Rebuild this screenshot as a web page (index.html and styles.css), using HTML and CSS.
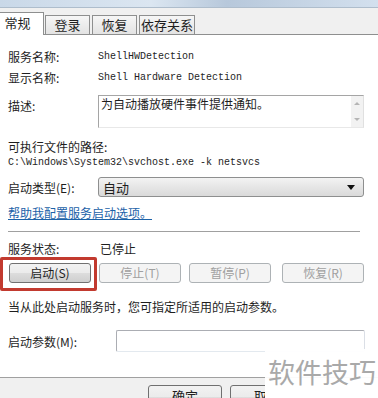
FILE: index.html
```html
<!DOCTYPE html>
<html lang="zh-CN">
  <head>
    <meta charset="UTF-8" />
    <title>ShellHWDetection 属性</title>
    <link rel="stylesheet" href="styles.css">
  </head>
  <body>
    <div class="window">
      <div class="titlebar"></div>
      <div class="tab_host">
        <div class="tab on">常规</div>
        <div class="tab">登录</div>
        <div class="tab">恢复</div>
        <div class="tab wide">依存关系</div>
      </div>

      <div class="panel">
        <div class="row">
          <span class="label">服务名称:</span>
          <span class="mono">ShellHWDetection</span>
        </div>
        <div class="row">
          <span class="label">显示名称:</span>
          <span class="mono">Shell Hardware Detection</span>
        </div>
        <div class="row desc_row">
          <span class="label">描述:</span>
          <div class="desc">
            <span>为自动播放硬件事件提供通知。</span>
            <div class="scroll">
              <span class="up"></span>
              <span class="down"></span>
            </div>
          </div>
        </div>
        <div class="path_label">可执行文件的路径:</div>
        <div class="mono path">C:\Windows\System32\svchost.exe -k netsvcs</div>
        <div class="row select_row">
          <span class="label">启动类型(E):</span>
          <div class="select">
            <span>自动</span>
            <span class="arrow"></span>
          </div>
        </div>
        <a class="help" href="#">帮助我配置服务启动选项。</a>
        <div class="sep"></div>
        <div class="row status">
          <span class="label">服务状态:</span>
          <span>已停止</span>
        </div>
        <div class="btn_row">
          <div class="btn start">启动(S)</div>
          <div class="btn off">停止(T)</div>
          <div class="btn off">暂停(P)</div>
          <div class="btn off">恢复(R)</div>
          <div class="mark"></div>
        </div>
        <div class="hint">当从此处启动服务时，您可指定所适用的启动参数。</div>
        <div class="row param_row">
          <span class="label param_label">启动参数(M):</span>
          <div class="input"></div>
        </div>
      </div>

      <div class="footer">
        <div class="btn big">确定</div>
        <div class="btn big">取消</div>
      </div>

      <div class="watermark">软件技巧</div>
    </div>
  </body>
</html>
```

FILE: styles.css
```css
body {
  margin: 0;
  background: #f0f0f0;
  font-family: "Noto Sans CJK SC", "Liberation Sans", sans-serif;
  font-size: 12px;
  color: #1e1e1e;
}

.window {
  position: relative;
  width: 378px;
  height: 398px;
  overflow: hidden;
  background: #f0f0f0;
}

.titlebar {
  height: 7px;
  background: linear-gradient(to right, #c9d8e8, #dbe6f1 40%, #b7c8db 60%, #d3e0ee);
  border-bottom: 1px solid #aebdcc;
}

.tab_host {
  display: flex;
  align-items: flex-end;
  height: 26px;
  border-bottom: 1px solid #8e8f8f;
}

.tab {
  width: 45px;
  height: 19px;
  box-sizing: border-box;
  text-align: center;
  white-space: nowrap;
  line-height: 18px;
  font-size: 13px;
  border: 1px solid #8e8f8f;
  border-bottom: none;
  background: linear-gradient(#f6f6f6, #e3e3e3);
  margin-left: 2px;
}

.tab.on {
  width: 44px;
  height: 23px;
  line-height: 20px;
  padding-right: 8px;
  margin: 0 0 -1px 0;
  background: #fff;
  border-left: none;
}

.tab.on + .tab {
  margin-left: 1px;
}

.tab.wide {
  width: 56px;
}

.panel {
  background: #fff;
  padding: 11px 0 0 8px;
  height: 343px;
  border-bottom: 1px solid #a0a0a0;
  box-sizing: border-box;
}

.row {
  display: flex;
  align-items: center;
  height: 21px;
}

.label {
  width: 90px;
  flex: none;
}

.mono {
  font-family: "Liberation Mono", "DejaVu Sans Mono", monospace;
  font-size: 10px;
}

.desc_row {
  margin-top: 7px;
  height: 33px;
  align-items: flex-start;
}

.desc_row .label {
  padding-top: 2px;
}

.desc {
  display: flex;
  justify-content: space-between;
  width: 266px;
  height: 33px;
  box-sizing: border-box;
  border: 1px solid #a5a5a5;
  border-right-color: #e0e0e0;
  border-bottom-color: #e8e8e8;
  padding: 0 0 0 2px;
  line-height: 15px;
}

.scroll {
  width: 12px;
  background: #f2f2f2;
  display: flex;
  flex-direction: column;
  justify-content: space-around;
  align-items: center;
}

.up, .down {
  width: 0;
  height: 0;
  border-left: 3px solid transparent;
  border-right: 3px solid transparent;
}

.up { border-bottom: 3px solid #b5b5b5; }
.down { border-top: 3px solid #b5b5b5; }

.path_label {
  margin-top: 10px;
  height: 17px;
  line-height: 17px;
}

.path {
  height: 16px;
  line-height: 16px;
}

.select_row {
  margin-top: 6px;
  height: 20px;
}

.select {
  display: flex;
  justify-content: space-between;
  align-items: center;
  width: 266px;
  height: 20px;
  box-sizing: border-box;
  border: 1px solid #8e8f8f;
  border-radius: 3px;
  padding: 0 8px 0 4px;
  font-size: 13px;
  background: linear-gradient(#f3f3f3, #e6e6e6 50%, #dadada);
}

.arrow {
  width: 0;
  height: 0;
  border-left: 4px solid transparent;
  border-right: 4px solid transparent;
  border-top: 5px solid #111;
}

.help {
  display: block;
  margin-top: 8px;
  height: 16px;
  line-height: 16px;
  color: #1c62a8;
  text-decoration: underline;
}

.sep {
  margin-top: 10px;
  width: 352px;
  border-top: 1px solid #a0a0a0;
}

.status {
  margin-top: 8px;
  height: 16px;
}

.status .label {
  width: 92px;
}

.btn_row {
  position: relative;
  display: flex;
  gap: 8px;
  margin-top: 7px;
  height: 20px;
}

.btn {
  width: 82px;
  height: 20px;
  box-sizing: border-box;
  border: 1px solid #707070;
  border-radius: 3px;
  background: linear-gradient(#f2f2f2, #ebebeb 50%, #dddddd 51%, #cfcfcf);
  text-align: center;
  line-height: 18px;
  white-space: nowrap;
}

.btn_row .btn:first-child {
  margin-left: 1px;
}

.btn.off {
  border-color: #adb2b5;
  background: #f4f4f4;
  color: #a0a0a0;
}

.btn_row .btn:nth-child(4) {
  margin-left: 3px;
}

.mark {
  position: absolute;
  left: -8px;
  top: -6px;
  width: 97px;
  height: 34px;
  box-sizing: border-box;
  border: 3px solid #c23a2f;
  border-radius: 2px;
}

.hint {
  margin-top: 16px;
  height: 16px;
  line-height: 16px;
}

.param_row {
  margin-top: 15px;
  height: 22px;
}

.param_label {
  width: 108px;
}

.input {
  width: 249px;
  height: 22px;
  box-sizing: border-box;
  border: 1px solid #abadb3;
  border-bottom-color: #e3e9ef;
  border-right-color: #dbdfe6;
  border-radius: 2px;
}

.footer {
  display: flex;
  gap: 8px;
  width: 265px;
  overflow: hidden;
  padding: 7px 0 0 148px;
  box-sizing: border-box;
}

.btn.big {
  flex: none;
  width: 74px;
  height: 24px;
  font-size: 13px;
  line-height: 19px;
}

.watermark {
  position: absolute;
  left: 265px;
  top: 349px;
  width: 113px;
  height: 49px;
  padding-left: 3px;
  box-sizing: border-box;
  background: rgba(255, 255, 255, 0.95);
  color: #a9a9a9;
  font-size: 27px;
  line-height: 46px;
}
```
